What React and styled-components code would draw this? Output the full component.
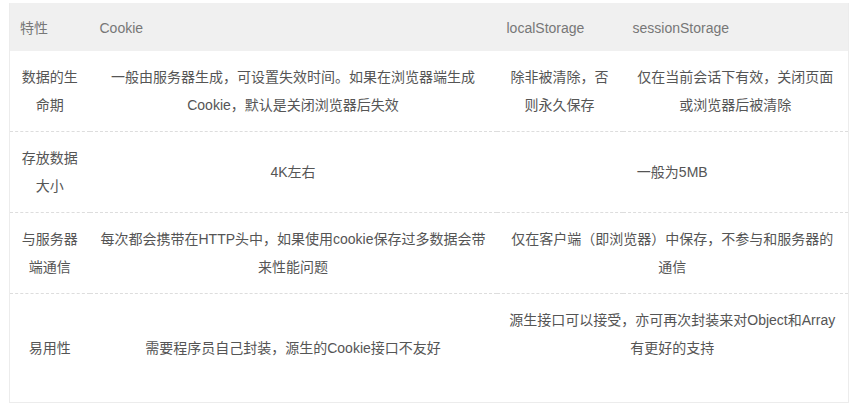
import styled, { createGlobalStyle } from "styled-components";

const GlobalStyle = createGlobalStyle`
  html, body {
    margin: 0;
    padding: 0;
    background: #fff;
  }
  body {
    font-family: "Liberation Sans", "Noto Sans CJK SC", Arial, sans-serif;
  }
`

const rows = [
  {
    name: '数据的生命期',
    cells: [
      { text: '一般由服务器生成，可设置失效时间。如果在浏览器端生成Cookie，默认是关闭浏览器后失效' },
      { text: '除非被清除，否则永久保存' },
      { text: '仅在当前会话下有效，关闭页面或浏览器后被清除' },
    ],
  },
  {
    name: '存放数据大小',
    cells: [
      { text: '4K左右' },
      { text: '一般为5MB', span: 2 },
    ],
  },
  {
    name: '与服务器端通信',
    cells: [
      { text: '每次都会携带在HTTP头中，如果使用cookie保存过多数据会带来性能问题' },
      { text: '仅在客户端（即浏览器）中保存，不参与和服务器的通信', span: 2 },
    ],
  },
  {
    name: '易用性',
    cells: [
      { text: '需要程序员自己封装，源生的Cookie接口不友好' },
      { text: '源生接口可以接受，亦可再次封装来对Object和Array有更好的支持', span: 2, trail: true },
    ],
  },
]

const App = () => {
  return (
    <>
      <GlobalStyle />
      <StyledPage>
        <StyledTable>
          <colgroup>
            <col style={{ width: 80 }} />
            <col style={{ width: 407 }} />
            <col style={{ width: 126 }} />
            <col style={{ width: 226 }} />
          </colgroup>
          <thead>
            <tr>
              <StyledTh>特性</StyledTh>
              <StyledTh>Cookie</StyledTh>
              <StyledTh>localStorage</StyledTh>
              <StyledTh>sessionStorage</StyledTh>
            </tr>
          </thead>
          <tbody>
            {rows.map((row, i) => (
              <StyledRow key={i} $last={i === rows.length - 1}>
                <StyledTd>{row.name}</StyledTd>
                {row.cells.map((cell, j) => (
                  <StyledTd key={j} colSpan={cell.span || 1} $trail={cell.trail}>
                    {cell.text}
                  </StyledTd>
                ))}
              </StyledRow>
            ))}
          </tbody>
        </StyledTable>
      </StyledPage>
    </>
  );
}

const StyledPage = styled.div`
  padding: 3px 0 0 9px;
`

const StyledTable = styled.table`
  width: 840px;
  table-layout: fixed;
  border-collapse: collapse;
  border: 1px solid #ececec;
  border-top: none;
  font-size: 14px;
  line-height: 28px;
  color: #555;
`

const StyledTh = styled.th`
  background: #f0f0f0;
  color: #777;
  font-weight: normal;
  text-align: left;
  padding: 11px 10px 9px;
`

const StyledRow = styled.tr`
  td {
    border-bottom: ${p => p.$last ? 'none' : '1px dashed #ddd'};
  }
`

const StyledTd = styled.td`
  text-align: center;
  vertical-align: middle;
  padding: 12px 10px ${p => p.$trail ? '40px' : '12px'};
`

export default App;
